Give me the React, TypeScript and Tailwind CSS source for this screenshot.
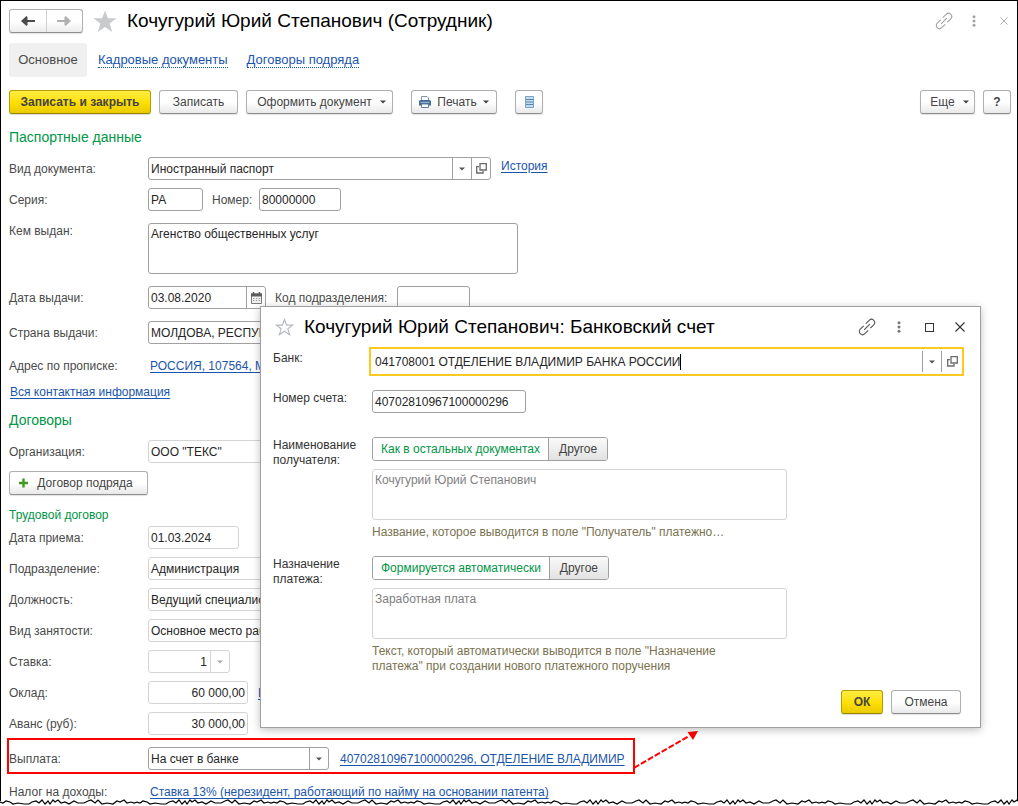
import type { ReactNode } from 'react';

const linkClass = 'text-[#1a55ad] underline underline-offset-2';
const fieldText = 'text-xs leading-4 text-[#262626]';
const activeBorder = 'border-[#a0a0a0]';
const quietBorder = 'border-[#d4d4d4]';

function LinkIcon() {
  return (
    <svg width="18" height="18" viewBox="0 0 18 18" fill="none" stroke="currentColor" strokeWidth="1.100" aria-hidden="true">
      <g transform="rotate(-45 9 9)">
        <path d="M7.500 5.800H2.700a3.200 3.200 0 0 0 0 6.400H7.500" />
        <path d="M10.500 5.800h4.800a3.200 3.200 0 0 1 0 6.400H10.500" />
        <path d="M5 9h8" />
      </g>
    </svg>
  );
}

function DotsIcon() {
  return (
    <svg width="4" height="12" viewBox="0 0 4 12" fill="currentColor" aria-hidden="true">
      <circle cx="2" cy="1.7" r="1.5" />
      <circle cx="2" cy="6" r="1.5" />
      <circle cx="2" cy="10.300" r="1.5" />
    </svg>
  );
}

function CrossIcon({ size }: { size: number }) {
  return (
    <svg width={size} height={size} viewBox="0 0 10 10" fill="none" stroke="currentColor" strokeWidth="1.1" aria-hidden="true">
      <path d="M0.500 0.500l9 9M9.500 0.500l-9 9" />
    </svg>
  );
}

function Caret() {
  return (
    <svg width="6" height="4" viewBox="0 0 6 4" fill="currentColor" aria-hidden="true" className="shrink-0">
      <path d="M0 0.500h6L3 3.500z" />
    </svg>
  );
}

function OpenIcon() {
  return (
    <svg width="11" height="11" viewBox="0 0 11 11" fill="none" stroke="#6b6b6b" strokeWidth="1.300" aria-hidden="true">
      <path d="M4 0.700h6.300v6.300H4z" />
      <path d="M3 3.700H0.700v6.300h6.300V8" />
    </svg>
  );
}

function CalendarIcon() {
  return (
    <svg width="11" height="12" viewBox="0 0 11 12" aria-hidden="true">
      <path d="M0.500 2h10v9.500h-10z" fill="#f2f2f2" stroke="#7a7a7a" />
      <path d="M0 1.500h11V4.500H0z" fill="#5c5c5c" />
      <path d="M2.500 0v3M8.500 0v3" stroke="#5c5c5c" strokeWidth="1.500" />
      <path d="M2 6.500h7M2 8.500h7" stroke="#9a9a9a" strokeDasharray="1.400 1.400" />
    </svg>
  );
}

function PrinterIcon() {
  return (
    <svg width="12" height="12" viewBox="0 0 12 12" aria-hidden="true">
      <path d="M2.500 5V0.500h5.500L9.500 2v3" fill="#fff" stroke="#7f93a8" />
      <path d="M1.500 4h9A1.500 1.500 0 0 1 12 5.500V9.500H0V5.500A1.500 1.500 0 0 1 1.500 4z" fill="#3f6a97" />
      <path d="M1.500 6.300h9" stroke="#a9c3dc" />
      <path d="M2.500 8h7v3.500h-7z" fill="#fff" stroke="#5f7f9f" />
    </svg>
  );
}

function ListIcon() {
  return (
    <svg width="9" height="12" viewBox="0 0 9 12" aria-hidden="true">
      <path d="M0.500 0.500h8v11h-8z" fill="#c3dbef" stroke="#7fa3c4" />
      <path d="M1 3.500h7M1 6h7M1 8.500h7" stroke="#5b86ae" />
    </svg>
  );
}

function Button({ children, className = '', label }: { children: ReactNode; className?: string; label?: string }) {
  return (
    <button
      type="button"
      aria-label={label}
      className={`flex h-6 items-center justify-center whitespace-nowrap rounded-[3px] border border-[#b0b0b0] border-b-[#8f8f8f] bg-linear-to-b from-white from-50% to-[#e9e9e9] text-xs text-[#444] shadow-[0_1px_1px_rgba(0,0,0,0.12)] ${className}`}
    >
      {children}
    </button>
  );
}

function PrimaryButton({ children, className = '' }: { children: ReactNode; className?: string }) {
  return (
    <button
      type="button"
      className={`flex h-6 items-center justify-center whitespace-nowrap rounded-[3px] border border-[#b3a000] border-b-[#978700] bg-linear-to-b from-[#ffec3d] via-[#ffe000] to-[#eacb00] text-xs font-bold text-[#444] shadow-[0_1px_1px_rgba(0,0,0,0.15)] ${className}`}
    >
      {children}
    </button>
  );
}

function Row({ id, label, children, className = '' }: { id: string; label: string; children: ReactNode; className?: string }) {
  return (
    <div className={`flex h-[23px] items-center ${className}`}>
      <label htmlFor={id} className="w-[139px] shrink-0">
        {label}
      </label>
      {children}
    </div>
  );
}

function TextField({ id, value, className, quiet = false }: { id: string; value: string; className: string; quiet?: boolean }) {
  return (
    <input
      id={id}
      defaultValue={value}
      className={`h-[23px] rounded-[3px] border bg-white px-0.5 outline-none ${fieldText} ${quiet ? quietBorder : activeBorder} ${className}`}
    />
  );
}

function SectionTitle({ children, className = '' }: { children: ReactNode; className?: string }) {
  return <h2 className={`text-sm leading-5 text-[#009646] ${className}`}>{children}</h2>;
}

function TornEdge() {
  return (
    <svg className="-mt-0.5 block h-[7px] w-full" aria-hidden="true">
      <defs>
        <pattern id="torn" width="137" height="7" patternUnits="userSpaceOnUse">
          <path
            d="M0 3l3 1 3-2 4 1 3 2 5-1 6 1 5 0 3-2 4-1 3 2 3-3 3 4 3-3 2 3 3-4 2 2 3-2 3 3 4-1 4 2 5-3 4 2 6 0 4-2 3-1 4 3 3-3 4 4 5-1 6 1 4-3 3 1 4-2 3 3 4-1 3 1 3-1"
            fill="none"
            stroke="#000"
            strokeWidth="1.200"
          />
        </pattern>
      </defs>
      <rect width="100%" height="7" fill="url(#torn)" />
    </svg>
  );
}

function Switcher({ name, first }: { name: string; first: string }) {
  return (
    <div role="group" aria-label={name} className="flex h-6 w-fit rounded-[3px] border border-[#a0a0a0] text-xs">
      <button type="button" aria-pressed="true" className="rounded-l-[2px] bg-white px-2 text-[#009646]">
        {first}
      </button>
      <button
        type="button"
        aria-pressed="false"
        className="rounded-r-[2px] border-l border-[#a0a0a0] bg-linear-to-b from-[#fafafa] to-[#e2e2e2] px-2.5 text-[#444]"
      >
        Другое
      </button>
    </div>
  );
}

function BankDialog() {
  return (
    <section
      role="dialog"
      aria-labelledby="dialog-title"
      className="absolute top-[305px] right-9 left-[259px] z-10 border border-[#a0a0a0] bg-white pt-2 pr-[19px] pb-[13px] pl-3 text-[#333] shadow-[0_2px_8px_rgba(0,0,0,0.25)]"
    >
      <header className="flex h-6 items-center">
        <button type="button" aria-label="В избранное" className="ml-0.5">
          <svg width="19" height="18" viewBox="0 0 20 19" fill="none" stroke="#b4b8c0" strokeWidth="1.200" aria-hidden="true">
            <path d="M10 1.500l2.200 6h6.300l-5 3.900 1.900 6.200L10 13.900l-5.400 3.700 1.900-6.200-5-3.900h6.300z" />
          </svg>
        </button>
        <h2 id="dialog-title" className="ml-2.5 text-[19px] leading-6 whitespace-nowrap text-black">
          Кочугурий Юрий Степанович: Банковский счет
        </h2>
        <div className="-mr-1 ml-auto flex items-center text-[#555]">
          <button type="button" aria-label="Получить ссылку">
            <LinkIcon />
          </button>
          <button type="button" aria-label="Меню" className="ml-[21px] text-[#777]">
            <DotsIcon />
          </button>
          <button type="button" aria-label="Развернуть" className="ml-6 size-[9px] border border-[#333]" />
          <button type="button" aria-label="Закрыть" className="ml-[21px] text-[#333]">
            <CrossIcon size={10} />
          </button>
        </div>
      </header>

      <div className="mt-2 flex">
        <label htmlFor="bank" className="w-24 shrink-0 pt-[3px]">
          Банк:
        </label>
        <div className="-mr-[3px] flex h-[29px] flex-1 items-center border-2 border-[#fcca1e] pl-1">
          <input
            id="bank"
            defaultValue="041708001 ОТДЕЛЕНИЕ ВЛАДИМИР БАНКА РОССИИ"
            className={`field-sizing-content outline-none ${fieldText}`}
          />
          <span className="h-4 w-px bg-black" />
          <div className="ml-auto flex h-[21px]">
            <button type="button" aria-label="Выбрать банк" className="flex w-[19px] items-center justify-center border-l border-[#a0a0a0] text-[#555]">
              <Caret />
            </button>
            <button type="button" aria-label="Открыть банк" className="flex w-[21px] items-center justify-center border-l border-[#a0a0a0]">
              <OpenIcon />
            </button>
          </div>
        </div>
      </div>

      <div className="mt-3.5 flex">
        <label htmlFor="account" className="w-[99px] shrink-0">
          Номер счета:
        </label>
        <TextField id="account" value="40702810967100000296" className="w-[154px]" />
      </div>

      <div className="mt-6 flex">
        <label htmlFor="payee" className="w-[99px] shrink-0 pt-px leading-[15px]">
          Наименование получателя:
        </label>
        <div>
          <Switcher name="Наименование получателя" first="Как в остальных документах" />
          <textarea
            id="payee"
            defaultValue="Кочугурий Юрий Степанович"
            className="mt-2 block h-[51px] w-[415px] resize-none rounded-[3px] border border-[#d4d4d4] px-0.5 py-0.5 text-xs leading-4 text-[#808080] outline-none"
          />
          <p className="mt-[5px] leading-[15px] text-[#7a7250]">Название, которое выводится в поле "Получатель" платежно…</p>
        </div>
      </div>

      <div className="mt-4 flex">
        <label htmlFor="purpose" className="w-[99px] shrink-0 pt-px leading-[15px]">
          Назначение платежа:
        </label>
        <div>
          <Switcher name="Назначение платежа" first="Формируется автоматически" />
          <textarea
            id="purpose"
            defaultValue="Заработная плата"
            className="mt-2 block h-[51px] w-[415px] resize-none rounded-[3px] border border-[#d4d4d4] px-0.5 py-0.5 text-xs leading-4 text-[#808080] outline-none"
          />
          <p className="mt-[5px] w-[370px] leading-[15px] text-[#7a7250]">
            Текст, который автоматически выводится в поле "Назначение платежа" при создании нового платежного поручения
          </p>
        </div>
      </div>

      <footer className="mt-4 flex justify-end gap-2">
        <PrimaryButton className="w-[42px]">ОК</PrimaryButton>
        <Button className="w-[70px]">Отмена</Button>
      </footer>
    </section>
  );
}

export default function App() {
  return (
    <div className="bg-white font-['Liberation_Sans',Arial,sans-serif] text-xs leading-4 text-[#4a4a4a]">
      <main className="relative border-x border-t border-black px-2 pt-2">
        <header className="flex h-6 items-center">
          <div className="flex h-6 w-[74px] rounded-[3px] border border-[#b0b0b0] border-b-[#8f8f8f] bg-linear-to-b from-white from-50% to-[#ececec] shadow-[0_1px_1px_rgba(0,0,0,0.12)]">
            <button type="button" aria-label="Назад" className="flex flex-1 items-center justify-center border-r border-[#cfcfcf] text-[#4a4a4a]">
              <svg width="14" height="10" viewBox="0 0 14 10" aria-hidden="true">
                <path d="M0 5l5.500-5 1 1v8l-1 1z" fill="currentColor" />
                <path d="M3 5h11" stroke="currentColor" strokeWidth="2" />
              </svg>
            </button>
            <button type="button" aria-label="Вперед" className="flex flex-1 items-center justify-center text-[#b0b0b0]">
              <svg width="14" height="10" viewBox="0 0 14 10" aria-hidden="true">
                <path d="M14 5L8.500 0l-1 1v8l1 1z" fill="currentColor" />
                <path d="M0 5h11" stroke="currentColor" strokeWidth="2" />
              </svg>
            </button>
          </div>
          <button type="button" aria-label="В избранное" className="ml-2.5">
            <svg width="24" height="23" viewBox="0 0 24 23" fill="#c9cacc" aria-hidden="true">
              <path d="M12 0.500l2.900 7.800h8.600l-6.900 5.200 2.600 8.500L12 16.900 4.800 22l2.600-8.500L0.500 8.300h8.600z" />
            </svg>
          </button>
          <h1 className="ml-2.5 text-[19px] leading-6 whitespace-nowrap text-black">Кочугурий Юрий Степанович (Сотрудник)</h1>
          <div className="ml-auto flex items-center text-[#a3a3a3]">
            <button type="button" aria-label="Получить ссылку">
              <LinkIcon />
            </button>
            <button type="button" aria-label="Меню" className="ml-[19px]">
              <DotsIcon />
            </button>
            <button type="button" aria-label="Закрыть" className="mr-px ml-6">
              <CrossIcon size={8} />
            </button>
          </div>
        </header>

        <nav className="mt-2.5 flex h-[34px] items-center text-[13px]">
          <a href="#main" className="flex h-full w-[78px] items-center justify-center rounded-[3px] bg-[#f0f0f0]">
            Основное
          </a>
          <a href="#staff" className="ml-[11px] border-b border-dotted border-[#1a55ad] leading-[14px] text-[#1a55ad]">
            Кадровые документы
          </a>
          <a href="#contracts" className="ml-[19px] border-b border-dotted border-[#1a55ad] leading-[14px] text-[#1a55ad]">
            Договоры подряда
          </a>
        </nav>

        <div className="mt-[13px] flex">
          <PrimaryButton className="w-[142px]">Записать и закрыть</PrimaryButton>
          <Button className="ml-2 w-[79px]">Записать</Button>
          <Button className="ml-2 w-[147px] gap-2 pl-1">
            Оформить документ
            <Caret />
          </Button>
          <Button className="ml-[18px] w-[86px] gap-1.5">
            <PrinterIcon />
            Печать
            <Caret />
          </Button>
          <Button className="ml-[18px] w-7" label="Список">
            <ListIcon />
          </Button>
          <Button className="ml-auto w-[55px] gap-2 pl-1">
            Еще
            <Caret />
          </Button>
          <Button className="-mr-0.5 ml-2 w-7 font-bold">?</Button>
        </div>

        <SectionTitle className="mt-[13px]">Паспортные данные</SectionTitle>

        <Row id="doc-type" label="Вид документа:" className="mt-2.5">
          <div className="relative flex h-[23px] w-[343px] rounded-[3px] border border-[#a0a0a0]">
            <select id="doc-type" className={`flex-1 appearance-none bg-transparent px-0.5 outline-none ${fieldText}`}>
              <option>Иностранный паспорт</option>
            </select>
            <span className="pointer-events-none absolute inset-y-0 right-[19px] flex w-[19px] items-center justify-center border-l border-[#a0a0a0] text-[#555]">
              <Caret />
            </span>
            <button type="button" aria-label="Открыть вид документа" className="flex w-[19px] items-center justify-center border-l border-[#a0a0a0]">
              <OpenIcon />
            </button>
          </div>
          <a href="#history" className={`mb-1.5 ml-2.5 ${linkClass}`}>
            История
          </a>
        </Row>

        <Row id="series" label="Серия:" className="mt-2">
          <TextField id="series" value="РА" className="w-[55px]" />
          <label htmlFor="number" className="ml-[9px] w-[47px]">
            Номер:
          </label>
          <TextField id="number" value="80000000" className="w-[82px]" />
        </Row>

        <div className="mt-3 flex">
          <label htmlFor="issuer" className="w-[139px] shrink-0">
            Кем выдан:
          </label>
          <textarea
            id="issuer"
            defaultValue="Агенство общественных услуг"
            className={`block h-[51px] w-[370px] resize-none rounded-[3px] border px-0.5 py-0.5 outline-none ${fieldText} ${activeBorder}`}
          />
        </div>

        <Row id="issue-date" label="Дата выдачи:" className="mt-3">
          <div className="flex h-[23px] w-[118px] rounded-[3px] border border-[#a0a0a0]">
            <input id="issue-date" defaultValue="03.08.2020" className={`w-full min-w-0 px-0.5 outline-none ${fieldText}`} />
            <button type="button" aria-label="Календарь" className="flex w-[19px] shrink-0 items-center justify-center border-l border-[#a0a0a0]">
              <CalendarIcon />
            </button>
          </div>
          <label htmlFor="unit-code" className="ml-[9px] w-[122px] whitespace-nowrap">
            Код подразделения:
          </label>
          <TextField id="unit-code" value="" className="w-[73px]" />
        </Row>

        <Row id="country" label="Страна выдачи:" className="mt-3">
          <TextField id="country" value="МОЛДОВА, РЕСПУБЛИКА" className="w-[370px]" />
        </Row>

        <div className="mt-3 flex leading-5">
          <span className="w-[141px] shrink-0">Адрес по прописке:</span>
          <a href="#address" className={`whitespace-nowrap ${linkClass}`}>
            РОССИЯ, 107564, М
          </a>
        </div>
        <div className="mt-1.5 pl-px leading-5">
          <a href="#contacts" className={linkClass}>
            Вся контактная информация
          </a>
        </div>

        <SectionTitle className="mt-2">Договоры</SectionTitle>
        <Row id="organization" label="Организация:" className="mt-2.5">
          <TextField id="organization" value={'ООО "ТЕКС"'} className="w-[370px]" quiet />
        </Row>
        <Button className="mt-2 w-[139px] gap-2 pr-1.5">
          <svg width="11" height="10" viewBox="0 0 10 10" aria-hidden="true">
            <path d="M5 0.500v9M0.500 5h9" stroke="#3f9a1f" strokeWidth="2.400" />
          </svg>
          Договор подряда
        </Button>

        <h3 className="mt-2.5 leading-5 text-[#009646]">Трудовой договор</h3>
        <div className="mt-px flex flex-col gap-2">
          <Row id="hire-date" label="Дата приема:">
            <TextField id="hire-date" value="01.03.2024" className="w-[91px]" quiet />
          </Row>
          <Row id="department" label="Подразделение:">
            <TextField id="department" value="Администрация" className="w-[370px]" quiet />
          </Row>
          <Row id="position" label="Должность:">
            <TextField id="position" value="Ведущий специалист" className="w-[370px]" quiet />
          </Row>
          <Row id="employment" label="Вид занятости:">
            <TextField id="employment" value="Основное место работы" className="w-[370px]" quiet />
          </Row>
          <Row id="rate" label="Ставка:">
            <div className="flex h-[23px] w-[82px] rounded-[3px] border border-[#d4d4d4]">
              <input id="rate" defaultValue="1" className={`w-full min-w-0 px-[3px] text-right outline-none ${fieldText}`} />
              <button type="button" aria-label="Выбрать ставку" className="flex w-[19px] shrink-0 items-center justify-center border-l border-[#d4d4d4] text-[#a8a8a8]">
                <Caret />
              </button>
            </div>
          </Row>
          <Row id="salary" label="Оклад:">
            <TextField id="salary" value="60 000,00" className="w-[100px] text-right" quiet />
            <a href="#salary-history" className={`ml-2.5 ${linkClass}`}>
              История
            </a>
          </Row>
          <Row id="advance" label="Аванс (руб):">
            <TextField id="advance" value="30 000,00" className="w-[100px] text-right" quiet />
          </Row>
        </div>

        <div className="relative mt-[3px] -ml-0.5 w-fit border-2 border-[#f00] pt-[7px] pr-2 pb-0.5">
          <Row id="payout" label="Выплата:">
            <div className="relative flex h-[23px] w-[181px] rounded-[3px] border border-[#a0a0a0]">
              <select id="payout" className={`flex-1 appearance-none bg-transparent px-0.5 outline-none ${fieldText}`}>
                <option>На счет в банке</option>
              </select>
              <span className="pointer-events-none absolute inset-y-0 right-0 flex w-[19px] items-center justify-center border-l border-[#a0a0a0] text-[#555]">
                <Caret />
              </span>
            </div>
            <a href="#account" className={`ml-[11px] whitespace-nowrap ${linkClass}`}>
              40702810967100000296, ОТДЕЛЕНИЕ ВЛАДИМИР
            </a>
          </Row>
          <svg className="absolute -top-3 left-full" width="66" height="42" viewBox="0 0 66 42" aria-hidden="true">
            <path d="M1 40L56 8" stroke="#f00" strokeWidth="2" strokeDasharray="6 2" />
            <path d="M65 3L60 12 54.500 4z" fill="#f00" />
          </svg>
        </div>

        <div className="mt-[9px] flex leading-[18px]">
          <span className="w-[141px] shrink-0">Налог на доходы:</span>
          <a href="#tax" className={linkClass}>
            Ставка 13% (нерезидент, работающий по найму на основании патента)
          </a>
        </div>

        <BankDialog />
      </main>
      <TornEdge />
    </div>
  );
}
